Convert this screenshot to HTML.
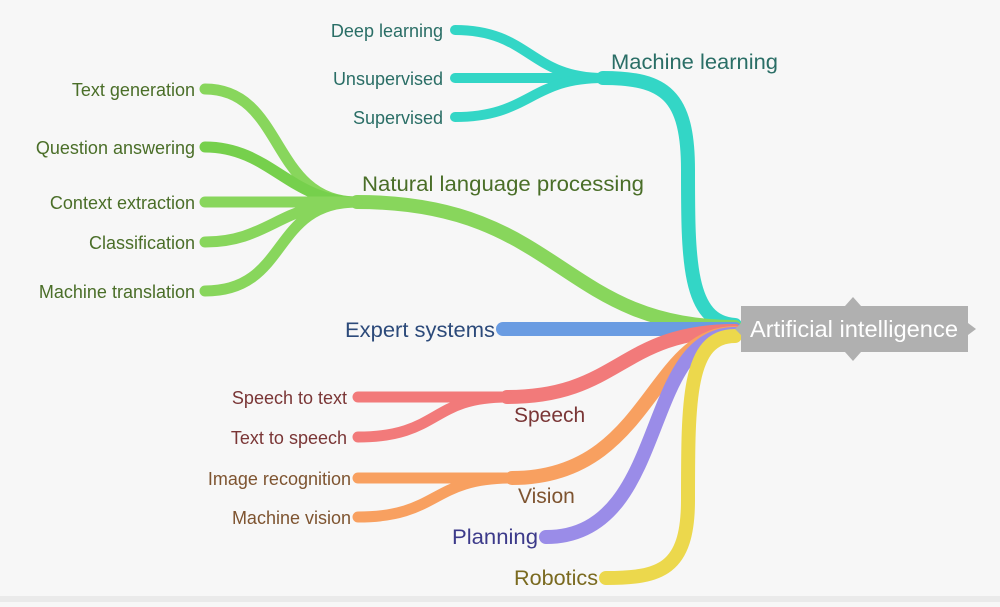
<!DOCTYPE html><html><head><style>
body{margin:0;background:#f7f7f7;width:1000px;height:602px;overflow:hidden;font-family:"Liberation Sans",sans-serif}
</style></head><body>
<svg width="1000" height="602" viewBox="0 0 1000 602" xmlns="http://www.w3.org/2000/svg" font-family="Liberation Sans, sans-serif">
<rect width="1000" height="602" fill="#f7f7f7"/>
<rect y="596" width="1000" height="6" fill="#eaeaea"/>
<g fill="none" stroke-linecap="round">
<g stroke="#33d6c6">
<path d="M735,325 C688,322 688,260 688,170 C688,95 665,78 603,78" stroke-width="14"/>
<path d="M603,78 C530,78 530,30 455,30" stroke-width="10"/>
<path d="M603,78 H455" stroke-width="10"/>
<path d="M603,78 C530,78 530,117 455,117" stroke-width="10"/>
</g>
<g stroke="#88d65c">
<path d="M735,327 C560,327 560,202 357,202" stroke-width="14"/>
<path d="M357,202 C270,202 285,89 205,89" stroke-width="11"/>
<path d="M357,202 C290,202 270,147 205,147" stroke-width="11" stroke="#76d04c"/>
<path d="M357,202 H205" stroke-width="11"/>
<path d="M357,202 C280,202 270,242 205,242" stroke-width="11"/>
<path d="M357,202 C270,202 290,291 205,291" stroke-width="11"/>
</g>
<path d="M735,329 H503" stroke="#6a9ce2" stroke-width="14"/>
<g stroke="#f27a7a">
<path d="M735,331 C620,331 620,397 507,397" stroke-width="14"/>
<path d="M507,397 H358" stroke-width="11"/>
<path d="M507,397 C430,397 440,437 358,437" stroke-width="11"/>
</g>
<g stroke="#f8a060">
<path d="M735,333 C650,333 650,478 512,478" stroke-width="14"/>
<path d="M512,478 H358" stroke-width="11"/>
<path d="M512,478 C430,478 440,517 358,517" stroke-width="11"/>
</g>
<path d="M735,334 C640,334 670,537 546,537" stroke="#9a8ce8" stroke-width="14"/>
<path d="M735,336 C688,336 688,400 688,500 C688,570 660,578 606,578" stroke="#ecd84c" stroke-width="14"/>
</g>
<path d="M741,306 H845 L853,297 L861,306 H968 V323 L976,329 L968,335 V352 H861 L853,361 L845,352 H741 V335 L735,329 L741,323 Z" fill="#b0b0b0"/>
<text x="854" y="337" font-size="23" fill="#fff" text-anchor="middle" textLength="208" lengthAdjust="spacingAndGlyphs">Artificial intelligence</text>
<g font-size="21">
<text x="611" y="69" fill="#2a6e66" textLength="167" lengthAdjust="spacingAndGlyphs">Machine learning</text>
<text x="362" y="191" fill="#4a6e28" textLength="282" lengthAdjust="spacingAndGlyphs">Natural language processing</text>
<text x="495" y="337" fill="#2c4a7a" text-anchor="end" textLength="150" lengthAdjust="spacingAndGlyphs">Expert systems</text>
<text x="514" y="422" fill="#7a3636">Speech</text>
<text x="518" y="503" fill="#7e5430">Vision</text>
<text x="538" y="544" fill="#3c3a8a" text-anchor="end" textLength="86" lengthAdjust="spacingAndGlyphs">Planning</text>
<text x="598" y="585" fill="#7a6a20" text-anchor="end" textLength="84" lengthAdjust="spacingAndGlyphs">Robotics</text>
</g>
<g font-size="18" text-anchor="end">
<g fill="#2a6e66">
<text x="443" y="37">Deep learning</text>
<text x="443" y="85">Unsupervised</text>
<text x="443" y="124">Supervised</text>
</g>
<g fill="#4a6e28">
<text x="195" y="96">Text generation</text>
<text x="195" y="154">Question answering</text>
<text x="195" y="209">Context extraction</text>
<text x="195" y="249">Classification</text>
<text x="195" y="298">Machine translation</text>
</g>
<g fill="#7a3636">
<text x="347" y="404">Speech to text</text>
<text x="347" y="444">Text to speech</text>
</g>
<g fill="#7e5430">
<text x="351" y="485">Image recognition</text>
<text x="351" y="524">Machine vision</text>
</g>
</g>
</svg>
</body></html>
